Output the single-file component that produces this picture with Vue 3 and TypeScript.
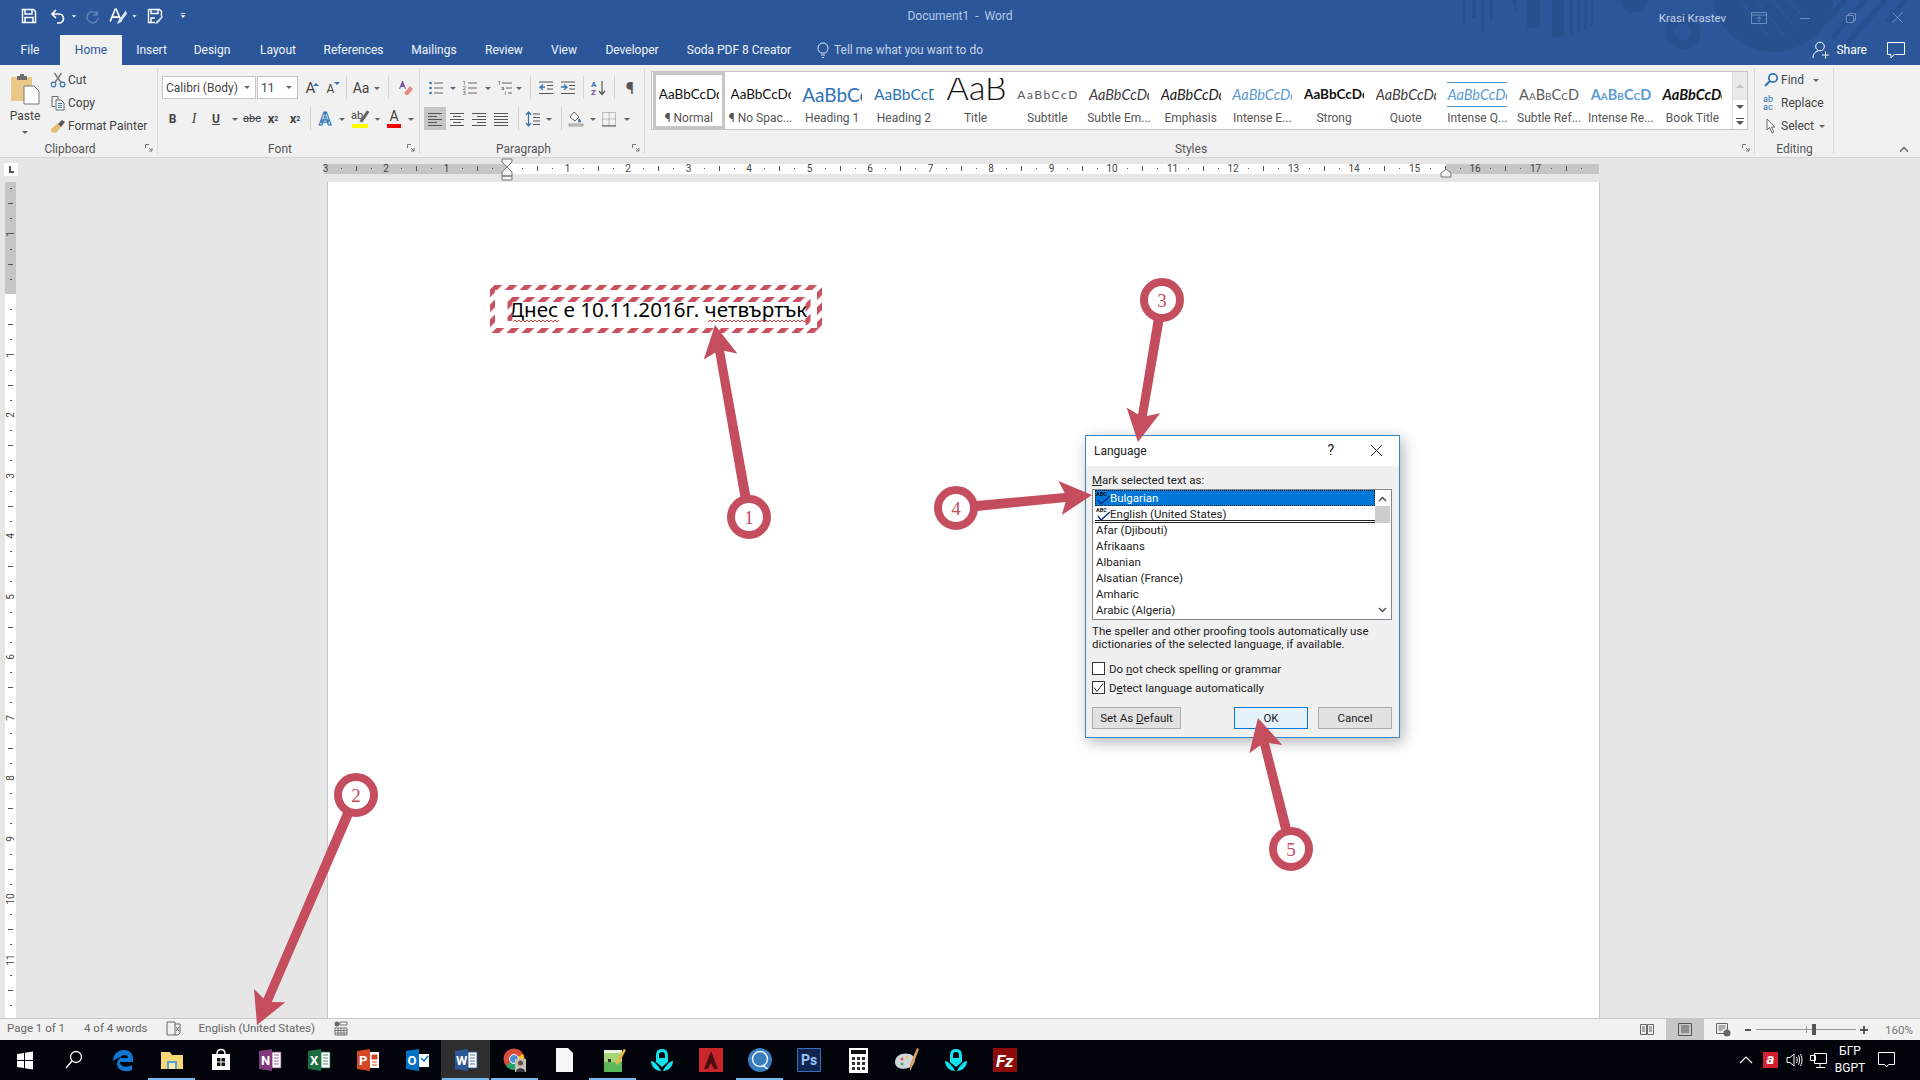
<template>
  <div class="word">
    <svg class="defs" width="0" height="0">
      <symbol id="caret" viewBox="0 0 16 16"><path d="M5 7h6l-3 3z" fill="#666" /></symbol>
      <symbol id="save" viewBox="0 0 16 16"><path d="M1.5 1.5h11l2 2v11h-13z M4 1.5v4.5h7v-4.5 M4 14.5v-5h8v5" fill="none" stroke="currentColor" stroke-width="1.5" /></symbol>
      <symbol id="undo" viewBox="0 0 16 16"><path d="M6 2L2 6l4 4 M2 6h7a4.5 4.5 0 0 1 0 9H7" fill="none" stroke="currentColor" stroke-width="1.7" /></symbol>
      <symbol id="redo" viewBox="0 0 16 16"><path d="M12 3v4H8 M12 6A5.5 5.5 0 1 0 13 10" fill="none" stroke="currentColor" stroke-width="1.6" /></symbol>
      <symbol id="qat-a" viewBox="0 0 16 16"><path d="M1 13L5.5 2h1L11 13 M3 9h6" fill="none" stroke="currentColor" stroke-width="1.4" /><path d="M15 3L9 11l-2 4 3-1 6-8z" fill="#dce6f3" /></symbol>
      <symbol id="saveas" viewBox="0 0 16 16"><path d="M1.5 1.5h11l2 2v5 M8 14.5H1.5v-13 M4 1.5v4h7v-4 M4 14v-4h4" fill="none" stroke="currentColor" stroke-width="1.4" /><path d="M15 8l-6 6-1 2 3-1 5-6z" fill="#dce6f3" /></symbol>
      <symbol id="custom" viewBox="0 0 16 16"><path d="M5 4h6v1H5z M5 7h6l-3 3.5z" fill="currentColor" /></symbol>
      <symbol id="scissors" viewBox="0 0 16 16"><circle cx="3.5" cy="12.5" r="2.3" fill="none" stroke="#2f75b5" stroke-width="1.2" /><circle cx="12.5" cy="12.5" r="2.3" fill="none" stroke="#2f75b5" stroke-width="1.2" /><path d="M5 10.5L11.5 1 M11 10.5L4.5 1" stroke="#777" stroke-width="1.4" /></symbol>
      <symbol id="copy" viewBox="0 0 16 16"><path d="M2 1.5h6v3 M2 1.5v10h3" fill="none" stroke="#666" /><path d="M6 5h5l3 3v7H6z" fill="#fff" stroke="#666" /><path d="M8 8.5h4 M8 10.5h4 M8 12.5h4" stroke="#2f75b5" /></symbol>
      <symbol id="painter" viewBox="0 0 16 16"><path d="M1 11l7-6 3 4-5 6-5-1z" fill="#e3bd73" /><path d="M8 6l4-4 3 2-4 5z" fill="#555" /></symbol>
      <symbol id="clear" viewBox="0 0 16 16"><path d="M5 1L2 9h1l1-2h3l1 2h1L6 1z" fill="#7a5aa6" /><path d="M7 13l6-7 3 3-5 6H9z" fill="#e58b8b" /></symbol>
      <symbol id="bullets" viewBox="0 0 16 16"><circle cx="2.5" cy="3" r="1.3" fill="#2f75b5" /><circle cx="2.5" cy="8" r="1.3" fill="#2f75b5" /><circle cx="2.5" cy="13" r="1.3" fill="#2f75b5" /><path d="M6 3h9 M6 8h9 M6 13h9" stroke="#666" /></symbol>
      <symbol id="numbers" viewBox="0 0 16 16"><text x="0.5" y="5" class="mini">1</text><text x="0.5" y="10" class="mini">2</text><text x="0.5" y="15" class="mini">3</text><path d="M6 3h9 M6 8h9 M6 13h9" stroke="#666" /></symbol>
      <symbol id="multi" viewBox="0 0 16 16"><text x="0.5" y="5" class="mini">1</text><text x="4" y="10" class="mini">a</text><text x="7.5" y="15" class="mini">i</text><path d="M5 3h10 M9 8h6 M11 13h4" stroke="#666" /></symbol>
      <symbol id="indent-l" viewBox="0 0 16 16"><path d="M1 2h14 M9 5.5h6 M9 9h6 M1 13.5h14" stroke="#555" /><path d="M7 7H2 M5 4.5L2 7.2l3 2.6" fill="none" stroke="#2f75b5" stroke-width="1.3" /></symbol>
      <symbol id="indent-r" viewBox="0 0 16 16"><path d="M1 2h14 M9 5.5h6 M9 9h6 M1 13.5h14" stroke="#555" /><path d="M1 7h5 M4 4.5L7 7.2l-3 2.6" fill="none" stroke="#2f75b5" stroke-width="1.3" /></symbol>
      <symbol id="sort" viewBox="0 0 16 16"><text x="0" y="7" class="mini blue">A</text><text x="0" y="15" class="mini violet">Z</text><path d="M11 1v13 M8 11l3 3.5 3-3.5" fill="none" stroke="#555" stroke-width="1.2" /></symbol>
      <symbol id="align-l" viewBox="0 0 16 16"><path d="M1 2.5h14 M1 5.5h9 M1 8.5h14 M1 11.5h9 M1 14.5h14" stroke="#555" /></symbol>
      <symbol id="align-c" viewBox="0 0 16 16"><path d="M1 2.5h14 M4 5.5h8 M1 8.5h14 M4 11.5h8 M1 14.5h14" stroke="#555" /></symbol>
      <symbol id="align-r" viewBox="0 0 16 16"><path d="M1 2.5h14 M6 5.5h9 M1 8.5h14 M6 11.5h9 M1 14.5h14" stroke="#555" /></symbol>
      <symbol id="align-j" viewBox="0 0 16 16"><path d="M1 2.5h14 M1 5.5h14 M1 8.5h14 M1 11.5h14 M1 14.5h14" stroke="#555" /></symbol>
      <symbol id="spacing" viewBox="0 0 16 16"><path d="M3.5 1v14 M1 4l2.5-3L6 4 M1 12l2.5 3L6 12" fill="none" stroke="#2f75b5" stroke-width="1.2" /><path d="M8 3h7 M8 6.5h7 M8 10h7 M8 13.5h7" stroke="#555" /></symbol>
      <symbol id="shade" viewBox="0 0 16 16"><path d="M6 1l5 5-4 4-5-4z" fill="#fff" stroke="#666" /><path d="M11 7l2 3a1.5 1.5 0 0 1-3 0z" fill="#2f75b5" /><path d="M1 13h14v2H1z" fill="#dedede" stroke="#777" stroke-width=".7" /></symbol>
      <symbol id="borders" viewBox="0 0 16 16"><path d="M1.5 1.5h13v13h-13z M8 1.5v13 M1.5 8h13" fill="none" stroke="#888" stroke-dasharray="1 1" /><path d="M1 15h14" stroke="#555" /></symbol>
      <symbol id="launcher" viewBox="0 0 8 8"><path d="M.5 4V.5H4 M4 4l3 3 M7 4v3H4" fill="none" stroke="#777" /></symbol>
      <symbol id="find" viewBox="0 0 16 16"><circle cx="10" cy="6" r="4.2" fill="none" stroke="#2f75b5" stroke-width="1.8" /><path d="M7 9l-5 5" stroke="#2f75b5" stroke-width="2.2" /></symbol>
      <symbol id="cursor" viewBox="0 0 16 16"><path d="M4 1v11l2.6-2.4L9 15l1.8-1-2.3-5h3.3z" fill="#fff" stroke="#666" /></symbol>
    </svg>

    <header class="head">
      <svg class="decor" viewBox="0 0 480 66" width="480" height="66">
        <g fill="#27508f">
          <path d="M22 0h3v24h-3z M32 0h4v18h-4z M41 0h3v32h-3z M50 0h3v22h-3z M72 0l5 15V0z M87 0h13v28H87z M112 0h12v37h-12z" />
          <path d="M130 0h3v34h-3z M137 0h3v33h-3z M144 0h3v30h-3z M151 0h2v26h-2z" />
          <path d="M180 0h27a13 12 0 0 1-27 0z" />
        </g>
        <circle cx="243" cy="32" r="13" fill="none" stroke="#27508f" stroke-width="9" />
        <path d="M273 0c5 30 30 52 60 52s60-22 60-52" fill="#27508f" />
        <path d="M300 0l30 38 M316 0l30 38 M332 0l22 26 M348 0l14 15" stroke="#2b579a" stroke-width="1.5" />
        <path d="M405 0l-19 22 M425 0l-33 38 M445 0l-44 50 M465 0l-18 22" stroke="#27508f" stroke-width="5" />
      </svg>
      <div class="titlebar">
        <div class="qat">
          <span v-for="(q, i) in qat" :key="i" class="qat-cell" :class="q.c" :style="{ width: q.w + 'px' }">
            <svg v-if="q.i" :width="q.s" :height="q.s"><use :href="'#' + q.i" /></svg>
          </span>
        </div>
        <div class="doc-title">Document1 &nbsp;-&nbsp; Word</div>
        <div class="winbar">
          <span class="user">Krasi Krastev</span>
          <span class="winbtn"><svg width="16" height="12" viewBox="0 0 16 12"><path d="M.5.5h15v11H.5z M.5 3h15 M8 10V5 M5.5 7L8 4.8 10.500 7" fill="none" stroke="currentColor" /></svg></span>
          <span class="winbtn"><svg width="10" height="10"><path d="M0 5.500h10" stroke="currentColor" /></svg></span>
          <span class="winbtn"><svg width="10" height="10"><path d="M.5 2.500h7v7h-7z M2.500 2.500v-2h7v7h-2" fill="none" stroke="currentColor" /></svg></span>
          <span class="winbtn"><svg width="11" height="11"><path d="M.5.5l10 10 M10.500.5l-10 10" stroke="currentColor" /></svg></span>
        </div>
      </div>
      <nav class="tabs">
        <span v-for="t in tabs" :key="t.t" class="tab" :class="{ on: t.t === 'Home' }" :style="{ width: t.w + 'px' }">{{ t.t }}</span>
        <span class="tell">
          <svg width="12" height="17" viewBox="0 0 12 17"><path d="M3.500 11C2 9.500 1 8 1 6a5 5 0 0 1 10 0c0 2-1 3.500-2.500 5z M4 13h4 M5 15.500h2" fill="none" stroke="#dbe5f3" /></svg>
          Tell me what you want to do
        </span>
        <span class="share">
          <svg width="18" height="18" viewBox="0 0 18 18"><circle cx="8" cy="5.500" r="4.300" fill="none" stroke="#fff" /><path d="M1 17c0-4 2-6.500 5-7 M10 14h7 M13.500 10.500v7" fill="none" stroke="#fff" /></svg>
          Share
        </span>
        <svg class="comment" width="18" height="17" viewBox="0 0 18 17"><path d="M.5.5h17v12H7l-3 3.500v-3.500H.5z" fill="none" stroke="#fff" /></svg>
      </nav>
    </header>

    <section class="ribbon">
      <div class="group g-clip">
        <div class="clip-body">
          <div class="paste">
            <svg width="30" height="32" viewBox="0 0 30 32">
              <path d="M1 4h21v24H1z" fill="#e9c987" />
              <path d="M7 3h3V1h4v2h3v4H7z" fill="#6d6d6d" />
              <path d="M14 13h10l5 5v13H14z" fill="#fff" stroke="#777" />
            </svg>
            <span>Paste</span>
            <svg class="paste-caret" width="16" height="16"><use href="#caret" /></svg>
          </div>
          <div class="clip-list">
            <div class="clip-row"><svg width="16" height="16"><use href="#scissors" /></svg>Cut</div>
            <div class="clip-row"><svg width="16" height="16"><use href="#copy" /></svg>Copy</div>
            <div class="clip-row"><svg width="16" height="16"><use href="#painter" /></svg>Format Painter</div>
          </div>
        </div>
        <div class="glabel">Clipboard</div>
        <svg class="launch" width="8" height="8"><use href="#launcher" /></svg>
      </div>

      <div v-for="g in toolGroups" :key="g.name" class="group" :class="g.c">
        <div class="tool-rows">
          <div v-for="(row, ri) in g.rows" :key="ri" class="tool-row">
            <span v-for="(it, ii) in row" :key="ii" class="tool" :class="it.c" :style="{ width: it.w + 'px' }">
              <svg v-if="it.i" :width="it.i === 'caret' ? 12 : 16" :height="it.i === 'caret' ? 12 : 16" :viewBox="it.i === 'caret' ? '2 2 12 12' : '0 0 16 16'"><use :href="'#' + it.i" width="16" height="16" /></svg>
              <template v-if="it.t">{{ it.t }}</template><sub v-if="it.sub">{{ it.sub }}</sub><sup v-if="it.sup">{{ it.sup }}</sup>
            </span>
          </div>
        </div>
        <div class="glabel">{{ g.name }}</div>
        <svg class="launch" width="8" height="8"><use href="#launcher" /></svg>
      </div>

      <div class="group g-styles">
        <div class="gallery">
          <div class="gal-items">
            <div v-for="s in styles" :key="s.label" class="gal-item" :class="{ sel: s.label === '¶ Normal' }">
              <div class="gal-prev"><span :class="s.c">{{ s.c === 's-title' ? 'AaB' : 'AaBbCcDd' }}</span></div>
              <div class="gal-label">{{ s.label }}</div>
            </div>
          </div>
          <div class="gal-scroll">
            <span class="gs gs-up"><svg width="8" height="5"><path d="M0 5l4-4 4 4z" fill="#c4c4c4" /></svg></span>
            <span class="gs"><svg width="8" height="5"><path d="M0 0l4 4 4-4z" fill="#555" /></svg></span>
            <span class="gs"><svg width="8" height="7"><path d="M0 0h8v1H0z M0 3h8L4 7z" fill="#555" /></svg></span>
          </div>
        </div>
        <div class="glabel">Styles</div>
        <svg class="launch" width="8" height="8"><use href="#launcher" /></svg>
      </div>

      <div class="group g-edit">
        <div class="clip-list">
          <div class="edit-row"><svg width="16" height="16"><use href="#find" /></svg>Find<svg class="edit-caret" width="12" height="12" viewBox="2 2 12 12"><use href="#caret" width="16" height="16" /></svg></div>
          <div class="edit-row"><span class="abac">ab<br />ac</span>Replace</div>
          <div class="edit-row"><svg width="16" height="16"><use href="#cursor" /></svg>Select<svg width="12" height="12" viewBox="2 2 12 12"><use href="#caret" width="16" height="16" /></svg></div>
        </div>
        <div class="glabel">Editing</div>
      </div>
      <svg class="collapse" width="10" height="6"><path d="M1 5.500l4-4 4 4" fill="none" stroke="#666" stroke-width="1.500" /></svg>
    </section>

    <main class="work">
      <div class="corner"><span class="corner-l"></span></div>
      <div class="hruler">
        <span class="hr-white"></span>
        <template v-for="m in hMarks" :key="m.x">
          <span v-if="m.n" class="hr-num" :style="{ left: m.x + 'px' }">{{ m.n }}</span>
          <span v-else class="hr-tick" :class="{ long: m.long }" :style="{ left: m.x + 'px' }"></span>
        </template>
        <svg class="marker m-left" width="12" height="23" viewBox="0 0 12 23"><path d="M1 1h10v3L6 9 1 4z M1 18v-4l5-5 5 5v4z M1 18h10v4H1z" fill="#f4f4f4" stroke="#777" /></svg>
        <svg class="marker m-right" width="12" height="10" viewBox="0 0 12 10"><path d="M1 9V5l5-4 5 4v4z" fill="#f4f4f4" stroke="#777" /></svg>
      </div>
      <div class="vruler">
        <span class="vr-grey"></span>
        <template v-for="m in vMarks" :key="m.y">
          <span v-if="m.n" class="vr-num" :style="{ top: m.y + 'px' }">{{ m.n }}</span>
          <span v-else class="vr-tick" :class="{ long: m.long }" :style="{ top: m.y + 'px' }"></span>
        </template>
      </div>
      <div class="page">
        <p class="doc-text">Днес е 10.11.2016г. четвъртък</p>
      </div>
    </main>

    <footer class="status">
      <span class="st st-page">Page 1 of 1</span>
      <span class="st st-words">4 of 4 words</span>
      <svg class="st-book" width="15" height="15" viewBox="0 0 15 15"><path d="M1 1h8v13H1z M9 3h5v9l-2 2H9 M10 6l3 4 M13 6l-3 4" fill="none" stroke="#666" /></svg>
      <span class="st st-lang">English (United States)</span>
      <svg class="st-macro" width="14" height="15" viewBox="0 0 14 15"><circle cx="3" cy="3" r="2.500" fill="#666" /><path d="M6 1h7v3H6z M1 7h12v7H1z M1 9.500h12 M1 12h12 M4 7v7 M7 7v7 M10 7v7" fill="none" stroke="#777" /></svg>
      <span class="st-right">
        <span class="view"><svg width="14" height="13" viewBox="0 0 14 13"><path d="M.5 1.500h6v10h-6z M7.500 1.500h6v10h-6z M2 4h3 M2 6h3 M2 8h3 M9 4h3 M9 6h3 M9 8h3" fill="none" stroke="#666" /></svg></span>
        <span class="view on"><svg width="14" height="13" viewBox="0 0 14 13"><path d="M.5.500h13v12H.5z M3 3h8 M3 5h8 M3 7h8 M3 9h8" fill="none" stroke="#555" /></svg></span>
        <span class="view"><svg width="15" height="14" viewBox="0 0 15 14"><path d="M.5.500h11v10H.5z M2.500 3h7 M2.500 5h7 M2.500 7h4" fill="none" stroke="#666" /><circle cx="11" cy="10" r="3.500" fill="#666" /></svg></span>
        <span class="zoom-minus"></span>
        <span class="slider"><i class="slider-mid"></i><i class="slider-thumb"></i></span>
        <span class="zoom-plus"></span>
        <span class="zoom-val">160%</span>
      </span>
    </footer>

    <footer class="taskbar">
      <span v-for="t in taskIcons" :key="t" class="task" :class="{ run: running.includes(t), active: t === 'word' }">
        <svg width="26" height="26" viewBox="0 0 26 26">
          <g v-if="t === 'win'" fill="#fff"><path d="M5 7l7-1v7H5z M13 5.800l8-1.200V13h-8z M5 14h7v7l-7-1z M13 14h8v8.400l-8-1.200z" /></g>
          <g v-else-if="t === 'search'" fill="none" stroke="#fff" stroke-width="1.300"><circle cx="15" cy="10" r="5.500" /><path d="M11 14l-6 7" /></g>
          <path v-else-if="t === 'edge'" d="M3 14C3 7 8 3 14 3c6 0 10 4 9 12H10c0 5 7 6 12 3v5c-7 3-15 0-15-6 0-3 2-6 5-7-3 0-6 2-9 4z M10 11h8c0-4-7-4-8 0z" fill="#0d77d4" fill-rule="evenodd" />
          <g v-else-if="t === 'explorer'"><path d="M2 5h9l2 3h11v14H2z" fill="#f8d775" /><path d="M8 14h10v8H8z" fill="#53a7d8" /><path d="M10 16h6v6h-6z" fill="#fbe9ac" /></g>
          <g v-else-if="t === 'store'"><path d="M4 7h18v16H4z" fill="#fff" /><path d="M9 7c0-6 8-6 8 0" fill="none" stroke="#fff" stroke-width="1.500" /><path d="M9 11h3.500v3.500H9z M13.500 11H17v3.500h-3.500z M9 15.500h3.500V19H9z M13.500 15.500H17V19h-3.500z" fill="#111" /></g>
          <g v-else-if="t === 'onenote'"><path d="M2 4l13-2v22L2 22z" fill="#80397b" /><path d="M15 5h9v16h-9z M17 8h5 M17 11h5 M17 14h5 M17 17h5" fill="#fff" stroke="#80397b" stroke-width=".8" /><text x="4" y="18" class="ticon">N</text></g>
          <g v-else-if="t === 'excel'"><path d="M2 4l13-2v22L2 22z" fill="#1d6f42" /><path d="M15 5h9v16h-9z M17 8h5 M17 11h5 M17 14h5 M17 17h5" fill="#fff" stroke="#1d6f42" stroke-width=".8" /><text x="4" y="18" class="ticon">X</text></g>
          <g v-else-if="t === 'ppt'"><path d="M2 4l13-2v22L2 22z" fill="#d24726" /><path d="M15 5h9v16h-9z" fill="#fff" /><path d="M17 8h5v4h-5z M17 15h5 M17 18h5" fill="#d24726" stroke="#d24726" /><text x="4" y="18" class="ticon">P</text></g>
          <g v-else-if="t === 'outlook'"><path d="M2 4l13-2v22L2 22z" fill="#0072c6" /><path d="M15 7h10v13H15z" fill="#fff" /><path d="M17 11l3 3 4-5" fill="none" stroke="#0072c6" stroke-width="1.500" /><text x="3.500" y="18" class="ticon">O</text></g>
          <g v-else-if="t === 'word'"><path d="M2 4l13-2v22L2 22z" fill="#2b5797" /><path d="M15 5h9v16h-9z M17 8h5 M17 11h5 M17 14h5 M17 17h5" fill="#fff" stroke="#2b5797" stroke-width=".8" /><text x="3" y="18" class="ticon">W</text></g>
          <g v-else-if="t === 'chrome'"><circle cx="12" cy="12" r="10.500" fill="#dd4b39" /><path d="M12 12L21 18A10.500 10.500 0 0 1 4 19z" fill="#22a565" /><path d="M12 12l9-5a10.500 10.500 0 0 1-4 14z" fill="#f8c51c" /><circle cx="12" cy="12" r="4.500" fill="#4a90d9" stroke="#fff" /><path d="M13 12h11v13H13z" fill="#c5c0b8" /><circle cx="18.500" cy="16" r="2.500" fill="#6b4d3e" /><path d="M14 25c0-5 9-5 9 0z" fill="#33363d" /></g>
          <path v-else-if="t === 'page'" d="M5 1h12l5 5v19H5z" fill="#f6f6f6" />
          <g v-else-if="t === 'notes'"><path d="M4 3h18v22H4z" fill="#a9d477" /><path d="M4 15h18v10H4z" fill="#5cb85c" /><path d="M4 3h18v3H4z" fill="#e8f2d9" /><path d="M8 12h3v3H8z" fill="#333" /><path d="M15 16L24 2l2 1-8 15z" fill="#e8b53e" /></g>
          <g v-else-if="t === 'shield1' || t === 'shield2'" fill="#10e3ee"><path d="M13 2c-6 0-6 4-6 9h3c0-4 0-6 3-6s3 2 3 6h3c0-5 0-9-6-9z" /><path d="M7 11h12v4l-6 5-6-5z" /><path d="M2 14c3 0 8 5 10 10C7 24 2 20 2 14z M24 14c-3 0-8 5-10 10 5 0 10-4 10-10z" /></g>
          <g v-else-if="t === 'acad'"><path d="M1 1h24v24H1z" fill="#c9262c" /><path d="M13 4L6 22h4l3-6 3 6h4z" fill="#4b0f10" /></g>
          <g v-else-if="t === 'bubble'"><circle cx="13" cy="13" r="12" fill="#3a7dbd" /><circle cx="13" cy="12" r="7.500" fill="none" stroke="#e8f2fb" stroke-width="1.500" /><path d="M15 18l6 4" stroke="#e8f2fb" stroke-width="1.500" /></g>
          <g v-else-if="t === 'ps'"><path d="M1.500 1.500h23v23h-23z" fill="#10244f" stroke="#3b6dbb" /><text x="5" y="18" class="ticon ps">Ps</text></g>
          <g v-else-if="t === 'calc'"><path d="M4 1h19v25H4z" fill="#fff" /><path d="M6 3h15v4H6z" fill="#111" /><path d="M7 10h3v3H7z M12 10h3v3h-3z M17 10h3v3h-3z M7 15h3v3H7z M12 15h3v3h-3z M17 15h3v3h-3z M7 20h3v3H7z M12 20h3v3h-3z M17 20h3v3h-3z" fill="#333" /></g>
          <g v-else-if="t === 'paint'"><path d="M1 15C1 8 9 5 16 7c5 2 6 7 3 11-4 5-18 6-18-3z" fill="#cfd6dc" /><circle cx="8" cy="12" r="1.500" fill="#d95757" /><circle cx="13" cy="10" r="1.500" fill="#e2c653" /><circle cx="8" cy="17" r="1.500" fill="#5aa86a" /><path d="M23 1l2 1-6 16-3 6 0-7z" fill="#d9a05b" /></g>
          <g v-else-if="t === 'fz'"><path d="M1 1h24v24H1z" fill="#8e0b0b" /><text x="4" y="20" class="ticon fz">Fz</text></g>
        </svg>
      </span>
      <div class="tray">
        <svg class="tr-up" width="14" height="8"><path d="M1 7l6-6 6 6" fill="none" stroke="#fff" stroke-width="1.200" /></svg>
        <span class="tr-avira">a</span>
        <svg class="tr-sound" width="17" height="16" viewBox="0 0 17 16"><path d="M1 5.500h3L8 2v12l-4-3.500H1z M10.500 5c1 2 1 4 0 6 M12.500 3.500c1.500 3 1.500 6 0 9 M14.500 2c2 4 2 8 0 12" fill="none" stroke="#fff" /></svg>
        <svg class="tr-net" width="17" height="15" viewBox="0 0 17 15"><path d="M4.500.500h12v10h-12z M.5 2.500h5v5h-5z M10 11v3 M6 14.500h9" fill="#02040c" stroke="#fff" /></svg>
        <div class="tr-lang">БГР<br />BGPT</div>
        <svg class="tr-note" width="17" height="16" viewBox="0 0 17 16"><path d="M.5.500h16v12h-6l-2 2.500-2-2.500h-6z" fill="none" stroke="#fff" /></svg>
      </div>
    </footer>

    <div class="dialog">
      <div class="dlg-title">
        <span class="dlg-name">Language</span>
        <span class="dlg-help">?</span>
        <svg width="13" height="13"><path d="M1 1l11 11 M12 1L1 12" stroke="#222" stroke-width="1" /></svg>
      </div>
      <div class="dlg-body">
        <div class="dlg-label"><u>M</u>ark selected text as:</div>
        <div class="listbox">
          <div class="list-rows">
            <div v-for="(l, i) in languages" :key="l" class="lang" :class="{ selected: i === 0, divided: i === 1, proof: i < 2 }">
              <svg v-if="i < 2" class="abc" width="15" height="15" viewBox="0 0 15 15"><text x="0" y="5.500" class="abc-t">ABC</text><path d="M2 10l3 4 9-8" fill="none" stroke="#0c2a8c" stroke-width="1.400" /></svg>
              {{ l }}
            </div>
          </div>
          <div class="list-scroll">
            <svg width="9" height="6"><path d="M1 5l3.500-3.500L8 5" fill="none" stroke="#555" stroke-width="1.500" /></svg>
            <span class="thumb"></span>
            <svg class="scroll-down" width="9" height="6"><path d="M1 1l3.500 3.500L8 1" fill="none" stroke="#555" stroke-width="1.500" /></svg>
          </div>
        </div>
        <p class="dlg-help-text">The speller and other proofing tools automatically use dictionaries of the selected language, if available.</p>
        <label class="check"><span class="box"></span><span>Do <u>n</u>ot check spelling or grammar</span></label>
        <label class="check"><span class="box"><svg width="11" height="11"><path d="M1 5.500l3 4 6-8" fill="none" stroke="#333" /></svg></span><span>D<u>e</u>tect language automatically</span></label>
        <div class="dlg-btns">
          <button class="btn b-default">Set As <u>D</u>efault</button>
          <button class="btn b-ok">OK</button>
          <button class="btn b-cancel">Cancel</button>
        </div>
      </div>
    </div>

    <svg class="overlay" width="1920" height="1080" viewBox="0 0 1920 1080">
      <defs>
        <pattern id="hatch" width="10.600" height="10.600" patternUnits="userSpaceOnUse" patternTransform="rotate(45)">
          <rect width="5.500" height="10.600" fill="#c8505f" />
        </pattern>
      </defs>
      <g fill="none" stroke="url(#hatch)">
        <rect x="492.500" y="287.500" width="327" height="43" stroke-width="5" />
        <path d="M510 321V299.500H808V325" stroke-width="5" />
      </g>
      <path :d="squiggle(513, 559, 322)" fill="none" stroke="#e04040" />
      <path :d="squiggle(708, 808, 322)" fill="none" stroke="#e04040" />
      <g v-for="a in arrows" :key="a.n">
        <polygon :points="a.points" fill="#c44d5e" />
        <circle :cx="a.cx" :cy="a.cy" r="18" fill="#fff" stroke="#c44d5e" stroke-width="8" />
        <text :x="a.cx" :y="a.cy + 7" class="arrow-num">{{ a.n }}</text>
      </g>
    </svg>
  </div>
</template>

<script setup lang="ts">
interface Tool {
  w: number;
  i?: string;
  t?: string;
  c?: string;
  sub?: string;
  sup?: string;
}

const qat = [
  { w: 19 },
  { w: 20, i: "save", s: 16 },
  { w: 9 },
  { w: 20, i: "undo", s: 16 },
  { w: 12, i: "caret", s: 12, c: "lt" },
  { w: 3 },
  { w: 20, i: "redo", s: 16, c: "dim" },
  { w: 4 },
  { w: 22, i: "qat-a", s: 18 },
  { w: 11, i: "caret", s: 12, c: "lt" },
  { w: 5 },
  { w: 20, i: "saveas", s: 16 },
  { w: 12 },
  { w: 12, i: "custom", s: 12 },
];

const tabs = [
  { t: "File", w: 60 },
  { t: "Home", w: 62 },
  { t: "Insert", w: 59 },
  { t: "Design", w: 62 },
  { t: "Layout", w: 70 },
  { t: "References", w: 81 },
  { t: "Mailings", w: 80 },
  { t: "Review", w: 60 },
  { t: "View", w: 60 },
  { t: "Developer", w: 76 },
  { t: "Soda PDF 8 Creator", w: 138 },
];

const caret = (w: number): Tool => ({ w, i: "caret" });
const sep = (w: number): Tool => ({ w, c: "sep" });

const toolGroups: { name: string; c: string; rows: Tool[][] }[] = [
  {
    name: "Font",
    c: "g-font",
    rows: [
      [
        { w: 94, t: "Calibri (Body)", c: "combo" },
        { w: 1 },
        { w: 41, t: "11", c: "combo" },
        { w: 3 },
        { w: 19, t: "A", c: "grow" },
        { w: 21, t: "A", c: "shrink" },
        sep(10),
        { w: 20, t: "Aa", c: "case" },
        caret(12),
        sep(10),
        { w: 24, i: "clear" },
      ],
      [
        { w: 21, t: "B", c: "fb" },
        { w: 22, t: "I", c: "fi" },
        { w: 22, t: "U", c: "fu" },
        caret(15),
        { w: 20, t: "abc", c: "fs" },
        { w: 22, t: "x", sub: "2", c: "fb sm" },
        { w: 22, t: "x", sup: "2", c: "fb sm" },
        sep(8),
        { w: 22, t: "A", c: "effect" },
        caret(12),
        { w: 24, t: "ab", c: "hilite" },
        caret(11),
        { w: 22, t: "A", c: "fcolor" },
        caret(12),
      ],
    ],
  },
  {
    name: "Paragraph",
    c: "g-para",
    rows: [
      [
        { w: 2 },
        { w: 20, i: "bullets" },
        caret(14),
        { w: 20, i: "numbers" },
        caret(16),
        { w: 17, i: "multi" },
        caret(12),
        sep(10),
        { w: 22, i: "indent-l" },
        { w: 22, i: "indent-r" },
        sep(9),
        { w: 22, i: "sort" },
        sep(9),
        { w: 22, t: "¶", c: "pil" },
      ],
      [
        { w: 22, i: "align-l", c: "hl" },
        { w: 22, i: "align-c" },
        { w: 22, i: "align-r" },
        { w: 22, i: "align-j" },
        sep(12),
        { w: 18, i: "spacing" },
        caret(14),
        sep(11),
        { w: 18, i: "shade" },
        caret(15),
        { w: 18, i: "borders" },
        caret(18),
      ],
    ],
  },
];

const styles = [
  { label: "¶ Normal", c: "s-n" },
  { label: "¶ No Spac...", c: "s-n" },
  { label: "Heading 1", c: "s-h1" },
  { label: "Heading 2", c: "s-h2" },
  { label: "Title", c: "s-title" },
  { label: "Subtitle", c: "s-sub" },
  { label: "Subtle Em...", c: "s-em g" },
  { label: "Emphasis", c: "s-em" },
  { label: "Intense E...", c: "s-em b" },
  { label: "Strong", c: "s-strong" },
  { label: "Quote", c: "s-em g" },
  { label: "Intense Q...", c: "s-em b s-iq" },
  { label: "Subtle Ref...", c: "s-ref" },
  { label: "Intense Re...", c: "s-ref b s-bold" },
  { label: "Book Title", c: "s-book" },
];

// horizontal ruler, 60.5px to the unit, zero at x=183 of the ruler
const hMarks: { x: number; n?: number; long?: boolean }[] = [];
for (let q = -12; q <= 71; q++) {
  const x = 183 + q * 15.125;
  if (q === 0) continue;
  if (q % 4 === 0) hMarks.push({ x, n: Math.abs(q / 4) });
  else hMarks.push({ x, long: Math.abs(q % 4) === 2 });
}

const vMarks: { y: number; n?: number; long?: boolean }[] = [];
for (let q = -7; q <= 47; q++) {
  const y = 112 + q * 15.125;
  if (q === 0) continue;
  if (q % 4 === 0) vMarks.push({ y, n: Math.abs(q / 4) });
  else vMarks.push({ y, long: Math.abs(q % 4) === 2 });
}

const taskIcons = [
  "win", "search", "edge", "explorer", "store", "onenote", "excel", "ppt", "outlook", "word", "chrome",
  "page", "notes", "shield1", "acad", "bubble", "ps", "calc", "paint", "shield2", "fz",
];
const running = ["explorer", "word", "chrome", "notes", "bubble"];

const languages = [
  "Bulgarian",
  "English (United States)",
  "Afar (Djibouti)",
  "Afrikaans",
  "Albanian",
  "Alsatian (France)",
  "Amharic",
  "Arabic (Algeria)",
];

const makeArrow = (n: number, cx: number, cy: number, tx: number, ty: number) => {
  const len = Math.hypot(tx - cx, ty - cy);
  const ux = (tx - cx) / len;
  const uy = (ty - cy) / len;
  const px = -uy;
  const py = ux;
  const at = (d: number, side: number) => `${(cx + ux * d + px * side).toFixed(1)},${(cy + uy * d + py * side).toFixed(1)}`;
  const points = [
    at(18, -5), at(len - 27, -4.5), at(len - 32, -17), at(len, 0), at(len - 32, 17), at(len - 27, 4.5), at(18, 5),
  ].join(" ");
  return { n, cx, cy, points };
};

const arrows = [
  makeArrow(1, 749, 517, 715, 325),
  makeArrow(2, 356, 795, 257, 1025),
  makeArrow(3, 1162, 300, 1138, 442),
  makeArrow(4, 956, 508, 1092, 495),
  makeArrow(5, 1291, 849, 1258, 718),
];

const squiggle = (x1: number, x2: number, y: number) => {
  let d = `M${x1} ${y}`;
  for (let x = x1 + 2, up = true; x <= x2; x += 2, up = !up) d += `L${x} ${up ? y - 2 : y}`;
  return d;
};
</script>

<style scoped>
.word {
  position: relative;
  width: 1920px;
  height: 1080px;
  display: flex;
  flex-direction: column;
  overflow: hidden;
  font-family: Roboto, "Noto Sans", sans-serif;
  font-size: 12px;
  color: #444;
  background: #e6e6e6;
}
.defs {
  position: absolute;
}
.head {
  position: relative;
  height: 65px;
  flex: none;
  background: #2b579a;
  color: #fff;
}
.decor {
  position: absolute;
  right: 0;
  top: 0;
}
.titlebar {
  position: relative;
  height: 35px;
  display: grid;
  grid-template-columns: 1fr auto 1fr;
  align-items: center;
}
.qat {
  display: flex;
  align-items: center;
  padding-bottom: 4px;
  margin-top: -6px;
}
.qat-cell {
  display: flex;
  justify-content: center;
  align-items: center;
  height: 20px;
  color: #fff;
}
.qat-cell.dim {
  color: #5d80b6;
}
.qat-cell.lt :deep(use) {
  filter: brightness(3);
}
.doc-title {
  color: #b6c8e2;
  padding-bottom: 5px;
  padding-top: 1px;
  margin-bottom: 6px;
}
.winbar {
  display: flex;
  justify-content: flex-end;
  align-items: center;
  color: #6d8dbf;
  height: 35px;
  padding-bottom: 6px;
}
.user {
  color: #c3d2e8;
  margin-right: 10px;
  font-size: 11.5px;
}
.winbtn {
  width: 46px;
  display: flex;
  justify-content: center;
}
.tabs {
  position: relative;
  height: 30px;
  display: flex;
  align-items: stretch;
}
.tab {
  display: flex;
  justify-content: center;
  align-items: center;
  color: #f2f5fa;
}
.tab.on {
  background: #f1f1f1;
  color: #2b579a;
}
.tell {
  display: flex;
  align-items: center;
  gap: 5px;
  margin-left: 9px;
  color: #c6d4e8;
}
.share {
  margin-left: auto;
  display: flex;
  align-items: center;
  gap: 6px;
}
.comment {
  align-self: center;
  margin: 0 15px 0 20px;
}
.ribbon {
  height: 93px;
  flex: none;
  display: flex;
  background: #f1f1f1;
  border-bottom: 1px solid #d4d4d4;
  box-sizing: border-box;
}
.group {
  position: relative;
  display: flex;
  flex-direction: column;
  box-sizing: border-box;
  padding-top: 3px;
}
.group::after {
  content: "";
  position: absolute;
  right: 0;
  top: 3px;
  bottom: 3px;
  width: 1px;
  background: #dadada;
}
.g-clip {
  width: 158px;
}
.g-font {
  width: 262px;
  padding-left: 4px;
}
.g-para {
  width: 225px;
  padding-left: 4px;
}
.g-styles {
  width: 1110px;
  padding-left: 6px;
}
.g-edit {
  width: 79px;
}
.glabel {
  position: absolute;
  left: 0;
  right: 18px;
  bottom: -1px;
  height: 16px;
  line-height: 15px;
  text-align: center;
  color: #555;
}
.g-edit .glabel {
  right: 0;
}
.launch {
  position: absolute;
  right: 5px;
  bottom: 5px;
}
.clip-body {
  display: flex;
}
.paste {
  width: 50px;
  display: flex;
  flex-direction: column;
  align-items: center;
  padding-top: 5px;
  color: #444;
}
.paste span {
  margin-top: 3px;
  line-height: 16px;
}
.paste-caret {
  margin-top: 0;
}
.clip-list {
  display: flex;
  flex-direction: column;
}
.clip-row {
  height: 23px;
  display: flex;
  align-items: center;
  gap: 2px;
}
.tool-rows {
  display: flex;
  flex-direction: column;
  gap: 8px;
  padding-top: 8px;
}
.tool-row {
  display: flex;
  height: 23px;
}
.tool {
  flex: none;
  display: flex;
  justify-content: center;
  align-items: center;
  box-sizing: border-box;
  position: relative;
  color: #444;
}
.sep::after {
  content: "";
  width: 1px;
  height: 23px;
  background: #d4d4d4;
}
.combo {
  justify-content: flex-start;
  padding-left: 3px;
  background: #fff;
  border: 1px solid #c6c6c6;
}
.combo::after {
  content: "";
  position: absolute;
  right: 5px;
  top: 9px;
  border: 3px solid transparent;
  border-top: 3px solid #666;
}
.grow {
  font-size: 15px;
}
.shrink {
  font-size: 12px;
  padding-top: 3px;
}
.grow::after,
.shrink::after {
  content: "";
  position: absolute;
  right: 1px;
  top: 4px;
  border: 3px solid transparent;
}
.grow::after {
  border-bottom: 3px solid #2f75b5;
}
.shrink::after {
  top: 6px;
  border-top: 3px solid #2f75b5;
}
.case {
  font-size: 14px;
}
.fb {
  font-weight: 700;
}
.fi {
  font-style: italic;
  font-family: "Liberation Serif", serif;
  font-size: 14px;
}
.fu {
  font-weight: 700;
  text-decoration: underline;
}
.fs {
  text-decoration: line-through;
  font-size: 11px;
}
.sm {
  font-size: 13px;
}
.sm sub,
.sm sup {
  font-size: 7px;
}
.effect {
  font-size: 18px;
  font-weight: 700;
  color: #dce9f6;
  -webkit-text-stroke: 1px #2f75b5;
}
.hilite {
  font-size: 11px;
  padding: 0 6px 6px 0;
}
.hilite::before {
  content: "";
  position: absolute;
  right: 6px;
  top: 3px;
  width: 3px;
  height: 13px;
  background: #666;
  transform: rotate(35deg);
}
.hilite::after,
.fcolor::after {
  content: "";
  position: absolute;
  left: 4px;
  right: 4px;
  bottom: 2px;
  height: 4px;
  background: #ffff00;
}
.fcolor {
  font-size: 14px;
  padding-bottom: 5px;
}
.fcolor::after {
  background: #f00000;
}
.pil {
  font-size: 17px;
  color: #555;
}
.hl {
  background: #c6c6c6;
}
.gallery {
  height: 59px;
  margin-top: 3px;
  width: 1097px;
  box-sizing: border-box;
  display: flex;
  background: #fff;
  border: 1px solid #c6c6c6;
}
.gal-items {
  display: flex;
  padding: 0 0 0 1px;
}
.gal-item {
  width: 71.7px;
  box-sizing: border-box;
  height: 57px;
  display: flex;
  flex-direction: column;
  align-items: center;
  padding-top: 6px;
  overflow: hidden;
}
.gal-item.sel {
  border: 3px solid #c6c6c6;
  padding-top: 3px;
}
.gal-prev {
  height: 32px;
  width: 60px;
  overflow: hidden;
  display: flex;
  align-items: center;
  white-space: nowrap;
  font-family: Lato, "Open Sans", sans-serif;
  font-size: 13.5px;
  color: #111;
}
.gal-label {
  line-height: 16px;
  white-space: nowrap;
  color: #555;
}
.s-h1 {
  font-size: 19px;
  color: #2e74b5;
}
.s-h2 {
  font-size: 15.5px;
  color: #2e74b5;
}
.s-title {
  font-size: 34px;
  font-weight: 300;
  margin-left: 1px;
  line-height: 32px;
  color: #111;
  transform: translateY(-7px);
}
.s-sub {
  letter-spacing: 1.5px;
  font-size: 12px;
  color: #5a5a5a;
}
.s-em {
  font-style: italic;
  font-size: 14.5px;
  color: #222;
}
.s-em.g {
  color: #404040;
}
.s-em.b {
  color: #5b9bd5;
}
.s-iq {
  display: block;
  border-top: 1px solid #5b9bd5;
  border-bottom: 1px solid #5b9bd5;
  padding: 3px 0;
}
.s-strong {
  font-weight: 700;
  color: #111;
}
.s-ref {
  font-variant: small-caps;
  font-size: 14.5px;
  color: #5a5a5a;
}
.s-ref.b {
  color: #5b9bd5;
}
.s-bold {
  font-weight: 700;
}
.s-book {
  font-weight: 700;
  font-style: italic;
  font-size: 14.5px;
  color: #111;
}
.gal-scroll {
  margin-left: auto;
  width: 14px;
  display: flex;
  flex-direction: column;
  border-left: 1px solid #e0e0e0;
}
.gs {
  flex: 1;
  display: flex;
  justify-content: center;
  align-items: center;
  background: #fff;
}
.gs-up {
  flex: 1.9;
  background: #e9e9e9;
}
.edit-row {
  height: 23px;
  display: flex;
  align-items: center;
  gap: 2px;
  padding-left: 8px;
}
.edit-caret {
  margin-left: 4px;
}
.abac {
  width: 16px;
  font-size: 9px;
  line-height: 8px;
  color: #2f75b5;
}
.collapse {
  margin: auto 11px 5px auto;
}
.work {
  position: relative;
  flex: 1;
  min-height: 0;
  display: grid;
  grid-template-columns: 20px 1fr;
  grid-template-rows: 24px 1fr;
  background: #e6e6e6;
}
.corner {
  padding: 5px 0 0 4px;
}
.corner-l {
  display: block;
  width: 14px;
  height: 13px;
  background: #fff;
  position: relative;
}
.corner-l::after {
  content: "";
  position: absolute;
  left: 5px;
  top: 3px;
  width: 3px;
  height: 5px;
  border-left: 2px solid #555;
  border-bottom: 2px solid #555;
}
.hruler {
  position: relative;
  margin: 6px 0 0 304px;
  width: 1275px;
  height: 10px;
  background: #c6c6c6;
  font-size: 10px;
  color: #444;
}
.hr-white {
  position: absolute;
  left: 183px;
  width: 939px;
  top: 0;
  bottom: 0;
  background: #fff;
}
.hr-num {
  position: absolute;
  top: -1px;
  line-height: 12px;
  transform: translateX(-50%);
}
.hr-tick {
  position: absolute;
  top: 4px;
  width: 1px;
  height: 1px;
  background: #555;
}
.hr-tick.long {
  top: 2px;
  height: 5px;
}
.marker {
  position: absolute;
}
.m-left {
  left: 177px;
  top: -6px;
}
.m-right {
  left: 1116px;
  top: 4px;
}
.vruler {
  position: relative;
  margin-left: 5px;
  width: 11px;
  background: #fff;
  font-size: 10px;
  overflow: hidden;
}
.vr-grey {
  position: absolute;
  left: 0;
  right: 0;
  top: 0;
  height: 112px;
  background: #c6c6c6;
}
.vr-num {
  position: absolute;
  left: 0;
  width: 11px;
  text-align: center;
  line-height: 10px;
  transform: translateY(-50%) rotate(-90deg);
}
.vr-tick {
  position: absolute;
  left: 5px;
  width: 2px;
  height: 1px;
  background: #555;
}
.vr-tick.long {
  left: 3px;
  width: 5px;
}
.page {
  margin-left: 307px;
  width: 1273px;
  background: #fff;
  border-left: 1px solid #c6c6c6;
  border-right: 1px solid #c6c6c6;
  box-sizing: border-box;
  padding: 111px 0 0 181px;
}
.doc-text {
  margin: 0;
  font-family: "Noto Sans", sans-serif;
  font-size: 20.6px;
  line-height: 32px;
  color: #000;
  white-space: nowrap;
}
.status {
  height: 22px;
  flex: none;
  display: flex;
  align-items: center;
  background: #f1f1f1;
  border-top: 1px solid #c6c6c6;
  box-sizing: border-box;
  color: #666;
  font-size: 11.5px;
}
.st-page,
.st-words,
.st-lang {
  padding-bottom: 3px;
}
.st-page {
  margin-left: 7px;
}
.st-words {
  margin-left: 19px;
}
.st-book {
  margin-left: 18px;
  margin-bottom: 3px;
}
.st-lang {
  margin-left: 18px;
}
.st-macro {
  margin-left: 19px;
  margin-bottom: 3px;
}
.st-right {
  margin-left: auto;
  display: flex;
  align-items: center;
  height: 100%;
}
.view {
  width: 38px;
  height: 100%;
  display: flex;
  justify-content: center;
  align-items: center;
}
.view.on {
  background: #c6c6c6;
}
.zoom-minus {
  width: 6px;
  height: 2px;
  margin: 0 5px 0 3px;
  background: #555;
}
.slider {
  position: relative;
  width: 100px;
  height: 1px;
  background: #999;
}
.slider-mid {
  position: absolute;
  left: 50px;
  top: -3px;
  width: 1px;
  height: 7px;
  background: #999;
}
.slider-thumb {
  position: absolute;
  left: 56px;
  top: -5px;
  width: 4px;
  height: 11px;
  background: #555;
}
.zoom-plus {
  position: relative;
  width: 8px;
  height: 2px;
  margin: 0 17px 0 4px;
  background: #555;
}
.zoom-plus::after {
  content: "";
  position: absolute;
  left: 3px;
  top: -3px;
  width: 2px;
  height: 8px;
  background: #555;
}
.zoom-val {
  width: 35px;
  color: #777;
}
.taskbar {
  height: 40px;
  flex: none;
  display: flex;
  background: #02040c;
}
.task {
  position: relative;
  width: 49px;
  display: flex;
  justify-content: center;
  align-items: center;
}
.task.active {
  background: #2f2f2f;
}
.task.run::after {
  content: "";
  position: absolute;
  left: 1px;
  right: 1px;
  bottom: 0;
  height: 2px;
  background: #76b9ed;
}
.tray {
  margin-left: auto;
  display: flex;
  align-items: center;
  color: #fff;
  padding-right: 25px;
}
.tr-up {
  margin-right: 10px;
}
.tr-avira {
  width: 15px;
  height: 16px;
  background: #d3202c;
  color: #fff;
  font-style: italic;
  font-weight: 700;
  text-align: center;
  line-height: 14px;
  font-size: 15px;
  margin-right: 8px;
}
.tr-sound {
  margin-right: 7px;
}
.tr-net {
  margin-right: 7px;
}
.tr-lang {
  width: 32px;
  text-align: center;
  line-height: 17px;
  font-size: 12px;
  margin-right: 12px;
}
.dialog {
  position: absolute;
  left: 1085px;
  top: 435px;
  width: 315px;
  height: 303px;
  box-sizing: border-box;
  border: 1px solid #3a85c6;
  background: #f0f0f0;
  box-shadow: 3px 4px 14px rgba(0, 0, 0, 0.3);
  color: #222;
  font-size: 11.5px;
}
.dlg-title {
  height: 30px;
  background: #fff;
  display: flex;
  align-items: center;
  padding: 0 16px 2px 8px;
  box-sizing: border-box;
  font-size: 12px;
}
.dlg-name {
  padding-top: 2px;
}
.dlg-help {
  margin-left: auto;
  margin-right: 36px;
  font-size: 14px;
}
.dlg-body {
  padding: 6px 7px 0 6px;
}
.dlg-label {
  line-height: 16px;
  margin-bottom: 1px;
}
.listbox {
  height: 131px;
  box-sizing: border-box;
  border: 1px solid #828790;
  background: #fff;
  display: flex;
  padding: 0 1px 1px 1px;
}
.list-rows {
  width: 280px;
  margin-left: 1px;
}
.lang {
  position: relative;
  height: 16px;
  line-height: 16px;
  padding-left: 1px;
  white-space: nowrap;
  box-sizing: border-box;
}
.lang.proof {
  padding-left: 15px;
}
.lang.selected {
  background: #0078d7;
  color: #fff;
  outline: 1px dotted #222;
  outline-offset: -1px;
}
.lang.divided {
  border-bottom: 3px double #222;
  height: 17px;
  margin-bottom: -1px;
}
.abc {
  position: absolute;
  left: 1px;
  top: 0;
}
.abc-t {
  font-size: 5.5px;
  font-weight: 700;
  fill: #111;
}
.list-scroll {
  margin-left: auto;
  width: 15px;
  display: flex;
  flex-direction: column;
  align-items: center;
  padding-top: 6px;
  box-sizing: border-box;
}
.thumb {
  width: 15px;
  height: 17px;
  margin-top: 4px;
  background: #cdcdcd;
}
.scroll-down {
  margin-top: auto;
  margin-bottom: 5px;
}
.dlg-help-text {
  margin: 4px 0 0;
  line-height: 13px;
  width: 304px;
  padding-top: 1px;
  letter-spacing: 0.03px;
}
.check {
  display: flex;
  align-items: center;
  height: 19px;
  gap: 4px;
}
.check:first-of-type {
  margin-top: 8px;
}
.box {
  width: 13px;
  height: 13px;
  box-sizing: border-box;
  border: 1px solid #333;
  background: #fff;
  display: flex;
  align-items: center;
  justify-content: center;
}
.dlg-btns {
  display: flex;
  margin-top: 10px;
}
.btn {
  height: 22px;
  box-sizing: border-box;
  border: 1px solid #adadad;
  background: #e1e1e1;
  font: inherit;
  color: #222;
  padding: 0;
}
.b-default {
  width: 89px;
}
.b-ok {
  width: 74px;
  margin-left: 53px;
  background: #e5f1fb;
  border-color: #0078d7;
}
.b-cancel {
  width: 74px;
  margin-left: 10px;
}
.overlay {
  position: absolute;
  left: 0;
  top: 0;
  pointer-events: none;
}
.arrow-num {
  font-family: "Liberation Serif", serif;
  font-size: 19px;
  text-anchor: middle;
  fill: #c44d5e;
}
.mini {
  font-family: Roboto, sans-serif;
  font-size: 6px;
  fill: #555;
}
.mini.blue {
  fill: #2f75b5;
  font-weight: 700;
  font-size: 8px;
}
.mini.violet {
  fill: #7a3fa6;
  font-weight: 700;
  font-size: 8px;
}
.ticon {
  font-family: Roboto, sans-serif;
  font-size: 13px;
  font-weight: 700;
  fill: #fff;
}
.ticon.ps {
  font-size: 14px;
  fill: #9cc4f5;
}
.ticon.fz {
  font-size: 17px;
  font-style: italic;
}
</style>
